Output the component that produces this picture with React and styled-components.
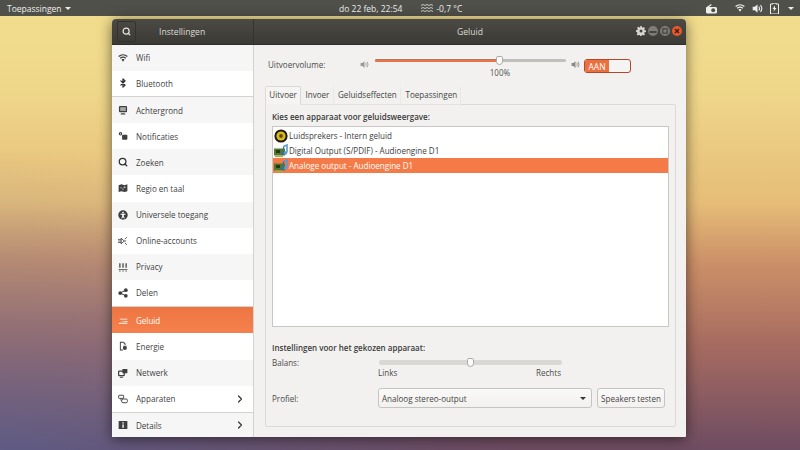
import React from 'react';
import styled, { createGlobalStyle } from 'styled-components';
import { ChevronRight, Search, Bluetooth } from 'lucide-react';

const Global = createGlobalStyle`
  html, body { margin: 0; padding: 0; width: 800px; height: 450px; overflow: hidden; }
  body { font-family: "Open Sans", "Noto Sans", "Liberation Sans", sans-serif; font-size: 8.05px; color: #3d3d3d; }
  #root { width: 800px; height: 450px; }
`;

const Desktop = styled.div`
  position: relative;
  width: 800px;
  height: 450px;
  overflow: hidden;
  background:
    radial-gradient(ellipse 520px 300px at 0% 100%, rgba(80,105,165,0.5) 0%, rgba(80,105,165,0) 100%),
    linear-gradient(180deg, #f2de8e 0%, #efd78a 20%, #e6bd78 45%, #cc9168 58%, #a86c60 76%, #6e4c62 100%);
`;

const Panel = styled.header`
  height: 16px;
  background: #50504b;
  color: #eeeeec;
  display: flex;
  align-items: center;
  font-size: 8.5px;
  padding: 0 6px 0 7px;
`;
const PanelLeft = styled.div`
  width: 332px;
  display: flex;
  align-items: center;
  gap: 3px;
`;
const PanelCenter = styled.div`
  display: flex;
  align-items: center;
  gap: 19px;
`;
const Weather = styled.span`
  display: flex;
  align-items: center;
  gap: 3px;
`;
const PanelRight = styled.div`
  margin-left: auto;
  display: flex;
  align-items: center;
  gap: 7px;
`;
const Caret = styled.span`
  width: 0;
  height: 0;
  border-left: 3px solid transparent;
  border-right: 3px solid transparent;
  border-top: 3px solid ${p => p.$color || '#eeeeec'};
`;

const Win = styled.section`
  position: absolute;
  left: 112px;
  top: 19px;
  width: 574px;
  height: 418px;
  border-radius: 4px 4px 1px 1px;
  box-shadow: 0 2px 14px rgba(0,0,0,0.55);
  display: flex;
  flex-direction: column;
  overflow: hidden;
  background: #f2f1f0;
`;
const Titlebar = styled.div`
  height: 25px;
  flex: none;
  display: flex;
  background: linear-gradient(180deg, #4b4a45, #3c3a34);
  color: #e6e5e1;
  border-bottom: 1px solid #2f2e2a;
`;
const TitleLeft = styled.div`
  width: 142px;
  flex: none;
  display: flex;
  align-items: center;
  padding-left: 5px;
  box-sizing: border-box;
  border-right: 1px solid #35342f;
`;
const SearchBtn = styled.div`
  width: 19px;
  height: 21px;
  border: 1px solid #33322d;
  border-radius: 2px;
  box-sizing: border-box;
  display: flex;
  align-items: center;
  justify-content: center;
  color: #e6e5e1;
`;
const SideTitle = styled.span`
  margin-left: 23px;
  font-size: 8.6px;
  color: #dddcd8;
`;
const TitleRight = styled.div`
  flex: 1;
  position: relative;
  display: flex;
  align-items: center;
  justify-content: center;
  font-size: 8.6px;
  color: #dddcd8;
`;
const WinButtons = styled.div`
  position: absolute;
  right: 4px;
  top: 7px;
  display: flex;
  gap: 2px;
`;

const Body = styled.div`
  flex: 1;
  display: flex;
  min-height: 0;
`;
const Sidebar = styled.nav`
  width: 141px;
  flex: none;
  display: flex;
  flex-direction: column;
  border-right: 1px solid #d5d3cf;
  box-sizing: content-box;
  background: #fff;
`;
const Group = styled.div`
  display: flex;
  flex-direction: column;
  flex: ${p => p.$h} 0 0;
  border-bottom: ${p => (p.$last ? 'none' : '1px solid #d5d3cf')};
`;
const Row = styled.div`
  flex: 1;
  display: flex;
  align-items: center;
  padding: 0 7px 0 6px;
  gap: 8px;
  font-size: 8.05px;
  color: ${p => (p.$active ? '#fff' : '#3f3f3f')};
  background: ${p => (p.$active ? 'linear-gradient(180deg,#ee7541,#f5814e)' : p.$alt ? '#f6f6f6' : '#fff')};
`;
const RowIcon = styled.span`
  width: 10px;
  height: 10px;
  flex: none;
  display: flex;
`;
const RowLabel = styled.span`
  flex: 1;
`;

const Main = styled.main`
  flex: 1;
  padding: 6px 10px 10px 11px;
  display: flex;
  flex-direction: column;
  min-width: 0;
  color: #4a4a48;
`;
const VolumeRow = styled.div`
  display: flex;
  align-items: flex-start;
  height: 35px;
  padding-left: 3px;
`;
const VolLabel = styled.span`
  width: 92px;
  margin-top: 8px;
`;
const SpkIcon = styled.span`
  display: flex;
  margin-top: 9px;
  margin-right: ${p => p.$mr}px;
`;
const VolSlider = styled.div`
  width: 191px;
  margin: 8px 5px 0 0;
`;
const Track = styled.div`
  position: relative;
  height: ${p => p.$h || 3}px;
  border-radius: 2px;
  background: ${p => p.$bg || '#c0bfbc'};
`;
const Fill = styled.div`
  height: 3px;
  border-radius: 2px;
  background: #ec7345;
  box-shadow: inset 0 1px 0 rgba(120,130,130,0.55);
`;
const Thumb = styled.div`
  position: absolute;
  top: ${p => p.$top}px;
  width: 7px;
  height: 9px;
  box-sizing: border-box;
  background: #fbfbfa;
  border: 1px solid #aaa9a5;
  border-radius: 2px 2px 4px 4px;
`;
const Percent = styled.div`
  text-align: center;
  margin: 6px 0 0 59px;
  line-height: 10px;
  color: #55554f;
`;
const Switch = styled.div`
  width: 47px;
  height: 14px;
  margin: 8px 0 0 4px;
  display: flex;
  border-radius: 3px;
  border: 1px solid #b0492a;
  box-sizing: border-box;
  overflow: hidden;
  background: #f5f4f3;
`;
const SwitchOn = styled.span`
  width: 24px;
  background: #ec6f3f;
  color: #fff;
  display: flex;
  align-items: center;
  justify-content: center;
  font-size: 8.5px;
`;

const Tabs = styled.div`
  display: flex;
  height: 19px;
  flex: none;
  margin-bottom: -1px;
  position: relative;
  z-index: 1;
`;
const Tab = styled.div`
  padding: 0 3.35px 2px;
  display: flex;
  align-items: center;
  border: 1px solid ${p => (p.$active ? '#dcdad6' : 'transparent')};
  border-bottom: ${p => (p.$active ? '1px solid #f2f1f0' : '1px solid #e4e2df')};
  border-right: 1px solid ${p => (p.$active ? '#dcdad6' : '#eae8e5')};
  border-radius: 2px 2px 0 0;
  background: ${p => (p.$active ? '#f5f4f3' : 'transparent')};
  color: #45453f;
  justify-content: center;
`;
const Frame = styled.div`
  flex: 1;
  border: 1px solid #dcdad6;
  border-radius: 0 2px 2px 2px;
  padding: 6px 6px 0 6px;
  display: flex;
  flex-direction: column;
  min-height: 0;
`;
const Heading = styled.div`
  font-weight: 600;
  font-size: 8px;
  line-height: 12px;
  color: #3a3a38;
`;
const DeviceList = styled.div`
  height: 201px;
  margin-top: 3px;
  background: #fff;
  border: 1px solid #c9c7c3;
  padding: 1px 0;
  flex: none;
  box-sizing: border-box;
`;
const Device = styled.div`
  height: 15px;
  display: flex;
  align-items: center;
  gap: 1px;
  padding-left: 1px;
  color: ${p => (p.$sel ? '#fff' : '#3d3d3d')};
  background: ${p => (p.$sel ? '#f47b47' : 'transparent')};
`;
const Section = styled.div`
  margin-top: 15px;
`;
const BalanceRow = styled.div`
  display: grid;
  grid-template-columns: 107px 183px;
  margin-top: 3px;
`;
const BalanceSlider = styled.div`
  padding-top: 3px;
`;
const ScaleLabels = styled.div`
  display: flex;
  justify-content: space-between;
  margin-top: 2px;
  line-height: 11px;
  padding-right: 1px;
  margin-left: -1px;
`;
const ProfileRow = styled.div`
  display: grid;
  gap: 0 5px;
  margin: 10px 0 0 0;
  grid-template-columns: 101px 214px 68px;
  align-items: center;
`;
const Combo = styled.div`
  height: 20px;
  box-sizing: border-box;
  border: 1px solid #c6c4bf;
  border-radius: 3px;
  background: linear-gradient(180deg, #faf9f9, #f2f1ef);
  display: flex;
  align-items: center;
  justify-content: space-between;
  padding: 0 5px 0 3px;
  color: #45453f;
`;
const Button = styled.div`
  height: 20px;
  box-sizing: border-box;
  border: 1px solid #c6c4bf;
  border-radius: 3px;
  background: linear-gradient(180deg, #faf9f9, #f2f1ef);
  display: flex;
  align-items: center;
  justify-content: center;
  white-space: nowrap;
  color: #45453f;
`;

const G = ({ children, c = '#3f3f3f', s = 10, vb = 16 }) => (
  <svg width={s} height={s} viewBox={`0 0 ${vb} ${vb}`} fill={c} stroke="none">{children}</svg>
);
const WifiI = ({ c = '#3f3f3f', s = 10 }) => (
  <G c={c} s={s}>
    <g fill="none" stroke={c} strokeWidth="2">
      <path d="M1 5.5c4-3.4 10-3.4 14 0" />
      <path d="M3.5 8.5c2.6-2.2 6.4-2.2 9 0" />
    </g>
    <path d="M5.6 10.4c1.4-1 3.4-1 4.8 0L8 14z" />
  </G>
);
const SpeakerI = ({ c = '#3f3f3f', s = 10, op = 1 }) => (
  <svg width={s} height={s} viewBox="0 0 16 16" fill={c} opacity={op}>
    <path d="M1 5.5h3L8 2v12l-4-3.5H1z" />
    <g fill="none" stroke={c} strokeWidth="1.6">
      <path d="M10 5c1.2 1.8 1.2 4.2 0 6" />
      <path d="M12.4 3c2.2 3 2.2 7 0 10" />
    </g>
  </svg>
);

const icons = {
  wifi: <WifiI />,
  bt: <Bluetooth size={10} strokeWidth={3} color="#2f2f2f" />,
  bg: <G><rect x="1.5" y="1.5" width="13" height="10" rx="1.5" /><rect x="3.5" y="3.5" width="9" height="6" fill="#fff" opacity=".55" /><path d="M5 13h6l1 2H4z" /></G>,
  notif: <G><circle cx="4" cy="4.5" r="2.8" /><rect x="6.5" y="6" width="8.5" height="8" rx="1.5" /><circle cx="4" cy="4.5" r="1" fill="#fff" /></G>,
  search: <Search size={10} strokeWidth={3} color="#2f2f2f" />,
  region: <G><path d="M1 3.5 5.5 2l5 1.5L15 2v11l-4.5 1.5-5-1.5L1 14.5z" /><path d="M4 7h2v1.5H4zM9 6h3v1.5H9zM7 9h2v1.5H7z" fill="#fff" /></G>,
  access: <G><circle cx="8" cy="8" r="7.6" /><circle cx="8" cy="4" r="1.4" fill="#fff" /><path d="M4 6h8v1.3L9.3 8v2l1.5 3.2-1.3.5L8 11l-1.5 2.7-1.3-.5L6.7 10V8L4 7.3z" fill="#fff" /></G>,
  online: <G><path d="M0 5.5h5M0 8h5M0 10.5h5" stroke="#3f3f3f" strokeWidth="1.2" /><path d="M5 3.5 10 8l-5 4.5z" fill="none" stroke="#3f3f3f" strokeWidth="1.4" /><path d="M10 8h3M11 5l3-3M11 11l3 3" stroke="#3f3f3f" strokeWidth="1.4" /></G>,
  privacy: <G><path d="M2 2h2v7H2zM7 2h2v7H7zM12 2h2v7h-2z" /><path d="M1 11h14v1.4H1zM2 13.5h2V15H2zM7 13.5h2V15H7zM12 13.5h2V15h-2z" /></G>,
  share: <G><circle cx="12.5" cy="3.5" r="3" /><circle cx="12.5" cy="12.5" r="3" /><circle cx="3.5" cy="8" r="3" /><path d="M3.5 8l9-4.5M3.5 8l9 4.5" stroke="#3f3f3f" strokeWidth="1.6" /></G>,
  sound: <G c="#fff"><path d="M1 11.5 15 9.5v2z" /><path d="M3 6h12v1.200H3zM1 13h14v1.200H1z" /></G>,
  power: <G><path d="M3 1h6l3 3v3h-1.5V5L8.5 2.6H4.5v10.8H8V15H3z" /><circle cx="11" cy="11" r="3.2" /><path d="M9 7.5v1.5M13 7.5v1.5" stroke="#3f3f3f" strokeWidth="1.2" /></G>,
  net: <G><rect x="1" y="5" width="9" height="7" rx="1" fill="none" stroke="#3f3f3f" strokeWidth="2" /><rect x="7" y="1.5" width="8" height="7" rx="1" /><path d="M3 14h5v1.4H3z" /></G>,
  dev: <G><rect x="1" y="2" width="8" height="5" rx="1" fill="none" stroke="#3f3f3f" strokeWidth="1.5" /><rect x="6" y="8" width="9" height="6" rx="2" fill="none" stroke="#3f3f3f" strokeWidth="1.5" /><path d="M3 8h2v3h1" stroke="#3f3f3f" fill="none" /></G>,
  info: <G><rect x="1" y="1.5" width="14" height="13" rx="1" /><rect x="7" y="3.5" width="2.2" height="2.2" fill="#fff" /><rect x="7" y="7" width="2.2" height="5.5" fill="#fff" /></G>,
};

const Yellow = () => (
  <svg width="14" height="14" viewBox="0 0 14 14">
    <circle cx="7" cy="7" r="6.6" fill="#1d1b12" />
    <circle cx="7" cy="7" r="4.6" fill="#d8b820" />
    <circle cx="7" cy="7" r="1.9" fill="#5c5010" />
  </svg>
);
const Card = () => (
  <svg width="14" height="14" viewBox="0 0 14 14">
    <rect x="0" y="4.5" width="11" height="7" fill="#4f7a2e" />
    <rect x="1" y="11.5" width="8" height="1.6" fill="#b8a34a" />
    <rect x="2" y="6" width="4" height="3" fill="#24351a" />
    <path d="M9.5 2.5 13 1v7.5" fill="none" stroke="#5b9bd0" strokeWidth="1.6" />
    <circle cx="11.5" cy="9" r="1.7" fill="#5b9bd0" />
    <path d="M9.5 2.5V9" stroke="#3a6f9c" strokeWidth="1.2" />
    <circle cx="8.2" cy="9.8" r="1.5" fill="#3a6f9c" />
  </svg>
);

const Gear = () => (
  <svg width="10" height="10" viewBox="0 0 16 16">
    <path fill="#d8d7d3" d="M6.8 0h2.4l.4 2.2 1.500.6L12.500 1.500l1.900 1.900-1.300 1.900.6 1.500 2.300.4v2.400l-2.300.4-.6 1.500 1.300 1.900-1.900 1.900-1.900-1.300-1.500.6-.4 2.300H6.800l-.4-2.300-1.500-.6-1.900 1.300-1.900-1.900 1.300-1.900-.6-1.500L0 9.200V6.800l2.300-.4.6-1.500-1.300-1.900 1.900-1.900 1.900 1.300 1.500-.6z" />
    <circle cx="8" cy="8" r="2.4" fill="#45443f" />
  </svg>
);
const Round = ({ kind }) => (
  <svg width="10" height="10" viewBox="0 0 10 10">
    <circle cx="5" cy="5" r="5" fill={kind === 'close' ? '#e9592a' : '#7d7c76'} />
    {kind === 'min' && <rect x="1.500" y="5" width="7" height="2" fill="#45443f" />}
    {kind === 'max' && <rect x="2.800" y="2.800" width="4.400" height="4.400" fill="none" stroke="#45443f" strokeWidth="1.200" />}
    {kind === 'close' && <path d="M3 3l4 4M7 3l-4 4" stroke="#402018" strokeWidth="1.500" />}
  </svg>
);

const Tray = () => (
  <PanelRight>
    <svg width="12" height="11" viewBox="0 0 12 11" fill="#eeeeec" style={{ marginRight: 11 }}>
      <path d="M1 4.500 6 1l.7 1L4 4h6.500A1.500 1.500 0 0 1 12 5.500V9a1.500 1.500 0 0 1-1.500 1.500h-8A1.500 1.500 0 0 1 1 9z" />
      <circle cx="8.200" cy="7.200" r="2" fill="#50504b" />
    </svg>
    <WifiI c="#eeeeec" s={10} />
    <SpeakerI c="#eeeeec" s={11} />
    <svg width="9" height="11" viewBox="0 0 9 11">
      <path d="M3 0h3v1h2.500v10h-8V1H3z" fill="none" stroke="#eeeeec" />
      <path d="M5 2.500 2.500 6H4l-.4 2.800L6.500 5H5z" fill="#eeeeec" />
    </svg>
    <Caret style={{ marginLeft: 2 }} />
  </PanelRight>
);

const groups = [
  { h: 51, rows: [['wifi', 'Wifi'], ['bt', 'Bluetooth', 1]] },
  { h: 209, rows: [['bg', 'Achtergrond'], ['notif', 'Notificaties', 1], ['search', 'Zoeken'], ['region', 'Regio en taal', 1], ['access', 'Universele toegang'], ['online', 'Online-accounts', 1], ['privacy', 'Privacy'], ['share', 'Delen', 1]] },
  { h: 105, rows: [['sound', 'Geluid', 0, 'active'], ['power', 'Energie', 1], ['net', 'Netwerk'], ['dev', 'Apparaten', 1, 'more']] },
  { h: 24, last: true, rows: [['info', 'Details', 0, 'more']] },
];

export default function App() {
  return (
    <Desktop>
      <Global />
      <Panel>
        <PanelLeft>Toepassingen <Caret /></PanelLeft>
        <PanelCenter>
          <span>do 22 feb, 22:54</span>
          <Weather>
            <svg width="12" height="9" viewBox="0 0 12 9" fill="none" stroke="#c9c9c4" strokeWidth="1">
              <path d="M0 1.500 2 .5l2 1 2-1 2 1 2-1 2 1M0 4.500l2-1 2 1 2-1 2 1 2-1 2 1M0 7.500l2-1 2 1 2-1 2 1 2-1 2 1" />
            </svg>
            -0,7 °C
          </Weather>
        </PanelCenter>
        <Tray />
      </Panel>
      <Win>
        <Titlebar>
          <TitleLeft>
            <SearchBtn><Search size={9} strokeWidth={3.2} /></SearchBtn>
            <SideTitle>Instellingen</SideTitle>
          </TitleLeft>
          <TitleRight>
            Geluid
            <WinButtons>
              <Gear /><Round kind="min" /><Round kind="max" /><Round kind="close" />
            </WinButtons>
          </TitleRight>
        </Titlebar>
        <Body>
          <Sidebar>
            {groups.map(g => (
              <Group key={g.h} $h={g.h} $last={g.last}>
                {g.rows.map(([ic, label, white, flag]) => (
                  <Row key={label} $alt={!white} $active={flag === 'active'}>
                    <RowIcon>{icons[ic]}</RowIcon>
                    <RowLabel>{label}</RowLabel>
                    {flag === 'more' && <ChevronRight size={12} strokeWidth={2.4} color="#333" />}
                  </Row>
                ))}
              </Group>
            ))}
          </Sidebar>
          <Main>
            <VolumeRow>
              <VolLabel>Uitvoervolume:</VolLabel>
              <SpkIcon $mr={6}><SpeakerI c="#9a9a96" s={9} /></SpkIcon>
              <VolSlider>
                <Track>
                  <Fill style={{ width: '65%' }} />
                  <Thumb $top={-3} style={{ left: '63.400%' }} />
                </Track>
                <Percent>100%</Percent>
              </VolSlider>
              <SpkIcon $mr={0}><SpeakerI c="#8a8a86" s={9} /></SpkIcon>
              <Switch>
                <SwitchOn>AAN</SwitchOn>
              </Switch>
            </VolumeRow>
            <Tabs>
              <Tab $active>Uitvoer</Tab>
              <Tab>Invoer</Tab>
              <Tab>Geluidseffecten</Tab>
              <Tab>Toepassingen</Tab>
            </Tabs>
            <Frame>
              <Heading>Kies een apparaat voor geluidsweergave:</Heading>
              <DeviceList>
                <Device><Yellow />Luidsprekers - Intern geluid</Device>
                <Device><Card />Digital Output (S/PDIF) - Audioengine D1</Device>
                <Device $sel><Card />Analoge output - Audioengine D1</Device>
              </DeviceList>
              <Section>
                <Heading>Instellingen voor het gekozen apparaat:</Heading>
                <BalanceRow>
                  <span>Balans:</span>
                  <BalanceSlider>
                    <Track $bg="#dad8d5" $h={5}>
                      <Thumb $top={-2} style={{ left: '48%' }} />
                    </Track>
                    <ScaleLabels><span>Links</span><span>Rechts</span></ScaleLabels>
                  </BalanceSlider>
                </BalanceRow>
                <ProfileRow>
                  <span>Profiel:</span>
                  <Combo>Analoog stereo-output <Caret $color="#333" /></Combo>
                  <Button>Speakers testen</Button>
                </ProfileRow>
              </Section>
            </Frame>
          </Main>
        </Body>
      </Win>
    </Desktop>
  );
}
